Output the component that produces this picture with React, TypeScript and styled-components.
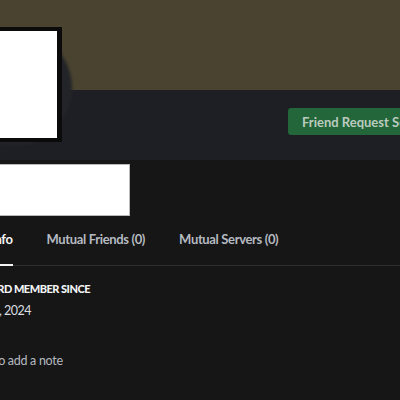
import React from "react";
import styled, { createGlobalStyle } from "styled-components";

const Global = createGlobalStyle`
  html, body { margin: 0; padding: 0; background: #161616; overflow: hidden; }
  body { font-family: Lato, "Noto Sans", sans-serif; }
`;

const Page = styled.div`
  width: 400px;
  height: 400px;
  overflow: hidden;
  position: relative;
  background: #161616;
`;

const Panel = styled.div`
  width: 480px;
  margin-left: -40px;
  position: relative;
`;

const Banner = styled.div`
  height: 90px;
  background: #4a4330;
`;

const Header = styled.div`
  height: 70px;
  background: #1e1f24;
  display: flex;
  align-items: flex-start;
  padding-left: 328px;
  padding-top: 18px;
  box-sizing: border-box;
`;

const AvatarHalo = styled.div`
  position: absolute;
  left: -4px;
  top: 30px;
  width: 116px;
  height: 116px;
  border-radius: 50%;
  background: #232429;
  filter: blur(1.5px);
`;

const AvatarBox = styled.div`
  position: absolute;
  left: 20px;
  top: 27px;
  width: 82px;
  height: 115px;
  box-sizing: border-box;
  border: 5px solid #0b0b0c;
  border-top-width: 4px;
  border-bottom-width: 4px;
  background: #ffffff;
`;

const Button = styled.button`
  height: 27px;
  padding: 0 14px;
  border: none;
  border-radius: 3px;
  background: #236639;
  color: #bccbbf;
  font-family: Lato, "Noto Sans", sans-serif;
  font-weight: 700;
  font-size: 13px;
  white-space: nowrap;
  cursor: default;
`;

const NameArea = styled.div`
  position: relative;
  padding-top: 4px;
  height: 66px;
  box-sizing: border-box;
  background: #161616;
`;

const NameBox = styled.div`
  width: 170px;
  height: 52px;
  box-sizing: border-box;
  border: 1px solid #b9b9b9;
  background: #ffffff;
`;

const Tabs = styled.div`
  position: relative;
  display: flex;
  gap: 34px;
  padding-left: 3px;
  border-bottom: 1px solid #2e2e30;
  height: 40px;
  box-sizing: border-box;
  align-items: stretch;
`;

const Tab = styled.div<{ $active?: boolean }>`
  display: flex;
  align-items: center;
  padding-bottom: 12px;
  box-sizing: border-box;
  font-size: 13px;
  font-weight: 700;
  letter-spacing: -0.35px;
  color: ${(p) => (p.$active ? "#f2f3f5" : "#b5bac1")};
  border-bottom: 2px solid ${(p) => (p.$active ? "#f2f3f5" : "transparent")};
  margin-bottom: -1px;
  white-space: nowrap;
`;

const Section = styled.div`
  position: relative;
  padding: 15px 0 0 6px;
  display: flex;
  flex-direction: column;
`;

const Heading = styled.div`
  font-size: 11px;
  font-weight: 900;
  letter-spacing: -0.5px;
  color: #f2f3f5;
  line-height: 16px;
`;

const DateText = styled.div`
  margin-top: 5px;
  font-size: 12.5px;
  letter-spacing: -0.5px;
  line-height: 18px;
  color: #dbdee1;
`;

const NoteHeading = styled(Heading)`
  margin-top: 12px;
`;

const NoteText = styled.div`
  margin-top: 4px;
  font-size: 12.5px;
  letter-spacing: -0.3px;
  line-height: 18px;
  color: #b5bac1;
`;

export default function App() {
  return (
    <>
      <Global />
      <Page>
        <Panel>
          <Banner />
          <Header>
            <Button>Friend Request Sent</Button>
          </Header>
          <AvatarHalo />
          <AvatarBox />
          <NameArea>
            <NameBox />
          </NameArea>
          <Tabs>
            <Tab $active>User Info</Tab>
            <Tab>Mutual Friends (0)</Tab>
            <Tab>Mutual Servers (0)</Tab>
          </Tabs>
          <Section>
            <Heading>DISCORD MEMBER SINCE</Heading>
            <DateText>Jan 14, 2024</DateText>
            <NoteHeading>NOTE</NoteHeading>
            <NoteText>Click to add a note</NoteText>
          </Section>
        </Panel>
      </Page>
    </>
  );
}
